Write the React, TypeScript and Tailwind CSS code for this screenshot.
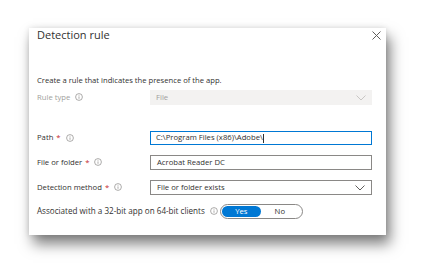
import React from "react";

const Info = ({ className = "" }: { className?: string }) => (
  <svg width="8" height="8" viewBox="0 0 8 8" className={className}>
    <circle cx="4" cy="4" r="3.4" fill="none" stroke="#8a8886" strokeWidth="0.7" />
    <line x1="4" y1="3.4" x2="4" y2="5.8" stroke="#8a8886" strokeWidth="0.7" />
    <circle cx="4" cy="2.3" r="0.45" fill="#8a8886" />
  </svg>
);

const Chevron = ({ color }: { color: string }) => (
  <svg width="10" height="6" viewBox="0 0 10 6">
    <polyline points="0.5,0.5 5,5 9.5,0.5" fill="none" stroke={color} strokeWidth="1" />
  </svg>
);

const Label = ({ text, req, disabled }: { text: string; req?: boolean; disabled?: boolean }) => (
  <div className={`w-[113px] flex items-center gap-[3px] text-[7.7px] ${disabled ? "text-[#a19f9d]" : "text-[#323130]"}`}>
    <span>{text}</span>
    {req && <span className="text-[#c4262e]">*</span>}
    <Info className="ml-[2px]" />
  </div>
);

export default function App() {
  return (
    <div className="w-[427px] h-[270px] bg-white pt-[28px] pl-[29px]" style={{ fontFamily: '"Open Sans", "Noto Sans", sans-serif' }}>
      <div className="w-[357px] h-[207px] bg-white shadow-[4px_9px_13px_rgba(0,0,0,0.5),0_0_6px_rgba(0,0,0,0.12)] pl-[8px] pr-[14px] flex flex-col">
        <div className="h-[13px] flex items-center justify-between">
          <span className="text-[11px] leading-[13px] text-[#323130]">Detection rule</span>
          <svg width="9" height="9" viewBox="0 0 9 9" className="mr-[-9px] mt-[1px]">
            <line x1="0.5" y1="0.5" x2="8.5" y2="8.5" stroke="#605e5c" strokeWidth="1" />
            <line x1="8.5" y1="0.5" x2="0.5" y2="8.5" stroke="#605e5c" strokeWidth="1" />
          </svg>
        </div>
        <div className="mt-[34px] h-[10px] text-[7.65px] leading-[10px] text-[#323130]">
          Create a rule that indicates the presence of the app.
        </div>
        <div className="mt-[5px] h-[15px] flex items-center">
          <Label text="Rule type" disabled />
          <div className="w-[222px] h-[15px] bg-[#f3f2f1] flex items-center justify-between px-[6px] text-[7.7px] text-[#a19f9d]">
            <span>File</span>
            <Chevron color="#c8c6c4" />
          </div>
        </div>
        <div className="mt-[26px] h-[14px] flex items-center">
          <Label text="Path" req />
          <div className="w-[222px] h-[14px] border-[1.5px] border-[#0078d4] flex items-center px-[5px] text-[7.7px] text-[#323130]">
            <span>C:\Program Files (x86)\Adobe\</span>
            <span className="w-px h-[9px] bg-[#323130]" />
          </div>
        </div>
        <div className="mt-[10px] h-[15px] flex items-center">
          <Label text="File or folder" req />
          <div className="w-[222px] h-[15px] border border-[#8a8886] flex items-center px-[6px] text-[7.7px] text-[#323130]">
            Acrobat Reader DC
          </div>
        </div>
        <div className="mt-[10px] h-[15px] flex items-center">
          <Label text="Detection method" req />
          <div className="w-[222px] h-[15px] border border-[#8a8886] flex items-center justify-between px-[6px] text-[7.7px] text-[#323130]">
            <span>File or folder exists</span>
            <Chevron color="#605e5c" />
          </div>
        </div>
        <div className="mt-[9px] h-[15px] flex items-center">
          <div className="flex items-center text-[8.1px] text-[#323130]">
            <span>Associated with a 32-bit app on 64-bit clients</span>
            <Info className="ml-[5px]" />
          </div>
          <div className="ml-[2px] w-[83px] h-[15px] rounded-full border border-[#8a8886] flex items-center px-[1px] text-[7.7px]">
            <div className="w-[39px] h-[11px] rounded-full bg-[#0078d4] text-white flex items-center justify-center">Yes</div>
            <div className="flex-1 flex items-center justify-center text-[#323130] pr-[2px]">No</div>
          </div>
        </div>
      </div>
    </div>
  );
}
